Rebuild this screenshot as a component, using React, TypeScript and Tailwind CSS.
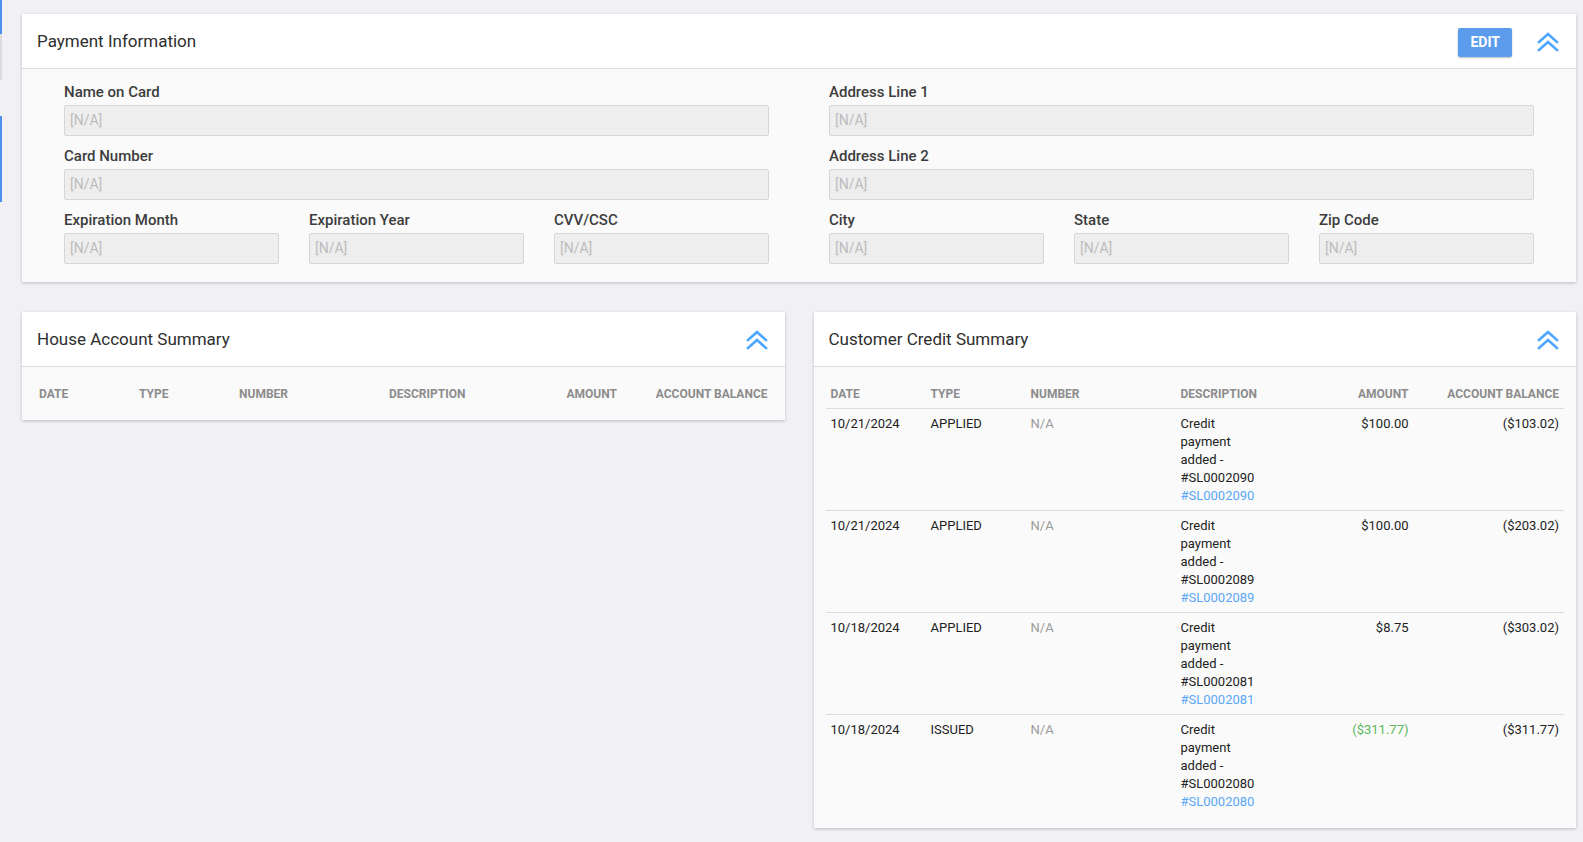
import React from 'react';

const font = { fontFamily: 'Roboto, "Liberation Sans", sans-serif' };

function ChevronsUp() {
  return (
    <svg width="22" height="20" viewBox="0 0 22 20" fill="none" stroke="#4da6ff" strokeWidth="2.6" strokeLinecap="square">
      <path d="M2 10 L11 2 L20 10" />
      <path d="M2 18 L11 10 L20 18" />
    </svg>
  );
}

function Field({ label }: { label: string }) {
  return (
    <div className="flex flex-col">
      <label className="text-[15px] leading-[21px] font-medium text-[#3d3d3d] mb-[2px]">{label}</label>
      <div className="h-[31px] border border-[#d6d6d6] bg-[#eeeeee] rounded-[2px] px-[5px] flex items-center text-[14px] text-[#bdbdbd]">
        [N/A]
      </div>
    </div>
  );
}

function CardHeader({ title, children }: { title: string; children?: React.ReactNode }) {
  return (
    <div className="h-[55px] pt-[2px] bg-white border-b border-[#dcdcdc] flex items-center justify-between pl-[15px] pr-[17px]">
      <h2 className="text-[17px] text-[#2e2e2e]">{title}</h2>
      <div className="flex items-center gap-[25px]">{children}</div>
    </div>
  );
}

type Row = {
  date: string;
  type: string;
  desc: string;
  link: string;
  amount: string;
  balance: string;
  green?: boolean;
};

const rows: Row[] = [
  { date: '10/21/2024', type: 'APPLIED', desc: 'Credit payment added - #SL0002090', link: '#SL0002090', amount: '$100.00', balance: '($103.02)' },
  { date: '10/21/2024', type: 'APPLIED', desc: 'Credit payment added - #SL0002089', link: '#SL0002089', amount: '$100.00', balance: '($203.02)' },
  { date: '10/18/2024', type: 'APPLIED', desc: 'Credit payment added - #SL0002081', link: '#SL0002081', amount: '$8.75', balance: '($303.02)' },
  { date: '10/18/2024', type: 'ISSUED', desc: 'Credit payment added - #SL0002080', link: '#SL0002080', amount: '($311.77)', balance: '($311.77)', green: true },
];

function SummaryTable({ data }: { data: Row[] }) {
  const th = 'px-[5px] pt-[8px] pb-[7px] text-[12px] leading-[14px] font-bold text-[#8c8c8c] uppercase';
  const td = 'px-[5px] pt-[6px] pb-[5px] align-top text-[13px] leading-[18px]';
  return (
    <table className="w-full table-fixed border-collapse">
      <colgroup>
        <col className="w-[100px]" />
        <col className="w-[100px]" />
        <col className="w-[150px]" />
        <col className="w-[87px]" />
        <col className="w-[151px]" />
        <col />
      </colgroup>
      <thead>
        <tr>
          <th className={`${th} text-left`}>Date</th>
          <th className={`${th} text-left`}>Type</th>
          <th className={`${th} text-left`}>Number</th>
          <th className={`${th} text-left`}>Description</th>
          <th className={`${th} text-right`}>Amount</th>
          <th className={`${th} text-right`}>Account Balance</th>
        </tr>
      </thead>
      <tbody>
        {data.map((r, i) => (
          <tr key={i} className="border-t border-[#dcdcdc] h-[101px]">
            <td className={`${td} text-[#222]`}>{r.date}</td>
            <td className={`${td} text-[#222]`}>{r.type}</td>
            <td className={`${td} text-[#9a9a9a]`}>N/A</td>
            <td className={`${td} text-[#222]`}>
              {r.desc}
              <br />
              <span className="text-[#5aa7f7]">{r.link}</span>
            </td>
            <td className={`${td} text-right ${r.green ? 'text-[#5cb85c]' : 'text-[#222]'}`}>{r.amount}</td>
            <td className={`${td} text-right text-[#222]`}>{r.balance}</td>
          </tr>
        ))}
      </tbody>
    </table>
  );
}

export default function App() {
  return (
    <div className="h-screen w-full overflow-hidden bg-[#f0f0f5] flex" style={font}>
      {/* left edge strip */}
      <div className="w-[2px] flex flex-col shrink-0">
        <div className="h-[34px] bg-[#4d8ff0]" />
        <div className="h-[46px] bg-[#dcdce0]" />
        <div className="h-[36px]" />
        <div className="h-[86px] bg-[#4d8ff0]" />
      </div>

      <div className="flex-1 pl-[20px] pr-[7px] pt-[14px] flex flex-col gap-[30px]">
        {/* Payment Information */}
        <section className="bg-[#fafafa] shadow-[0_1px_3px_rgba(0,0,0,0.22)]">
          <CardHeader title="Payment Information">
            <button className="h-[29px] px-[12px] bg-[#5b9cec] text-white text-[14px] font-bold rounded-[2px] shadow-[0_1px_2px_rgba(0,0,0,0.25)]">
              EDIT
            </button>
            <ChevronsUp />
          </CardHeader>
          <div className="px-[42px] pt-[13px] pb-[18px] grid grid-cols-2 gap-x-[60px]">
            <div className="flex flex-col gap-[10px]">
              <Field label="Name on Card" />
              <Field label="Card Number" />
              <div className="grid grid-cols-3 gap-x-[30px]">
                <Field label="Expiration Month" />
                <Field label="Expiration Year" />
                <Field label="CVV/CSC" />
              </div>
            </div>
            <div className="flex flex-col gap-[10px]">
              <Field label="Address Line 1" />
              <Field label="Address Line 2" />
              <div className="grid grid-cols-3 gap-x-[30px]">
                <Field label="City" />
                <Field label="State" />
                <Field label="Zip Code" />
              </div>
            </div>
          </div>
        </section>

        <div className="flex items-start gap-[29px]">
          <section className="flex-1 bg-[#fafafa] shadow-[0_1px_3px_rgba(0,0,0,0.22)]">
            <CardHeader title="House Account Summary">
              <ChevronsUp />
            </CardHeader>
            <div className="px-[12px] pt-[12px] pb-[12px]">
              <SummaryTable data={[]} />
            </div>
          </section>

          <section className="flex-1 bg-[#fafafa] shadow-[0_1px_3px_rgba(0,0,0,0.22)]">
            <CardHeader title="Customer Credit Summary">
              <ChevronsUp />
            </CardHeader>
            <div className="px-[12px] pt-[12px] pb-[12px]">
              <SummaryTable data={rows} />
            </div>
          </section>
        </div>
      </div>
    </div>
  );
}
